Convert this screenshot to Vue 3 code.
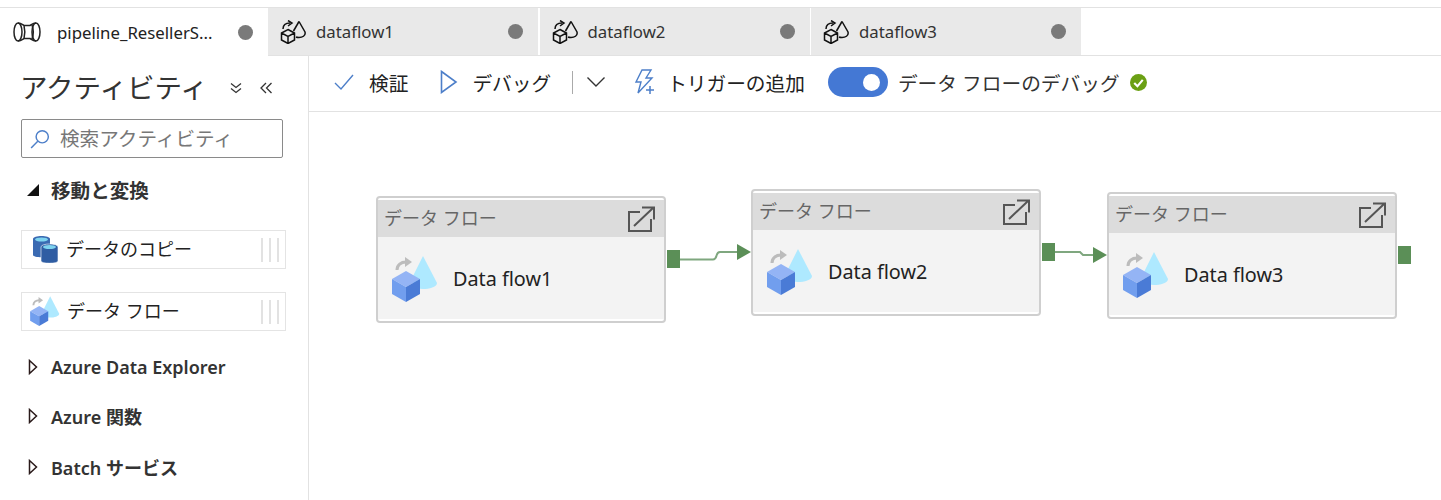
<template>
  <div class="page">
    <svg class="defs" width="0" height="0">
      <defs>
        <symbol id="flow-color" viewBox="0 0 46 48">
          <path d="M5 16c0-5 4-8 9-8" fill="none" stroke="#bcbcbc" stroke-width="3" />
          <path d="M13 3l7 5-7 5z" fill="#bcbcbc" />
          <path d="M31 2 45 29c0 4-8 6-14 6-4 0-8-1-10-3V22z" fill="#aee9ff" />
          <path d="M14 17 28 25 14 33 0 25z" fill="#94b4f5" />
          <path d="M0 25l14 8v15L0 40z" fill="#719eee" />
          <path d="M28 25 14 33v15l14-8z" fill="#4a7bd6" />
        </symbol>
        <symbol id="flow-line" viewBox="0 0 26 24">
          <path d="M3 9C3 5 6 3 10 3" fill="none" stroke="#111" stroke-width="1.500" />
          <path d="M8 .5 12 3 8 6" fill="none" stroke="#111" stroke-width="1.500" />
          <path d="M19 1.500 25 12c1 4-3 5.500-6 5.500-1 0-2 0-3-.5" fill="none" stroke="#111" stroke-width="1.500" />
          <path d="M19 1.500 13.500 11" fill="none" stroke="#111" stroke-width="1.500" />
          <path d="M8 9.500 14.500 13v7L8 23.500 1.500 20v-7zM1.500 13 8 16.500 14.500 13M8 16.500v7" fill="none" stroke="#111" stroke-width="1.500" />
        </symbol>
        <symbol id="open-ext" viewBox="0 0 27 26">
          <path d="M12 6H1v19h22V13" fill="none" stroke="#555" stroke-width="2" />
          <path d="M6 20 25 2M14 1.500h12v12" fill="none" stroke="#555" stroke-width="2" />
        </symbol>
      </defs>
    </svg>

    <div class="tabs">
      <div v-for="tab in tabs" :key="tab.name" class="tab" :class="{ active: tab.active }">
        <svg v-if="tab.active" class="pipe-icon" viewBox="0 0 28 20">
          <ellipse cx="5" cy="10" rx="4" ry="9" fill="none" stroke="#222" stroke-width="1.500" />
          <ellipse cx="23" cy="10" rx="4" ry="9" fill="none" stroke="#222" stroke-width="1.500" />
          <path d="M5 1c3 0 5 2 6 2.500h6C18 3 20 1 23 1M5 19c3 0 5-2 6-2.500h6c1 .5 3 2.500 6 2.500M11 3.500c1 4 1 9 0 13M19 3c1.500 4 1.500 10 0 14" fill="none" stroke="#222" stroke-width="1.500" />
        </svg>
        <svg v-else class="tab-icon"><use href="#flow-line" /></svg>
        <span class="tab-name">{{ tab.name }}</span>
        <span class="dot"></span>
      </div>
    </div>

    <div class="main">
      <aside class="side">
        <div class="side-head">
          <span class="side-title">アクティビティ</span>
          <svg class="chev" viewBox="0 0 14 14">
            <path d="M2 2.500 7 6.500 12 2.500M2 7.500 7 11.500 12 7.500" fill="none" stroke="#333" stroke-width="1.300" />
          </svg>
          <svg class="chev" viewBox="0 0 14 14">
            <path d="M7 2 2 7 7 12M12.500 2 7.500 7 12.500 12" fill="none" stroke="#333" stroke-width="1.300" />
          </svg>
        </div>

        <div class="search">
          <svg class="search-icon" viewBox="0 0 18 18">
            <circle cx="11" cy="7" r="5.500" fill="none" stroke="#4d7fc9" stroke-width="1.300" />
            <path d="M7 11 1 17" fill="none" stroke="#4d7fc9" stroke-width="1.300" />
          </svg>
          <span>検索アクティビティ</span>
        </div>

        <div class="group open-group">
          <span class="tri-open"></span>
          <span>移動と変換</span>
        </div>

        <div class="item copy-item">
          <svg class="copy-icon" viewBox="0 0 25 27">
            <path d="M0 3c0-4 17-4 17 0v16c0 3-17 3-17 0z" fill="#3a6ab2" />
            <ellipse cx="8.500" cy="3.500" rx="6.500" ry="2" fill="#7ed3ef" />
            <path d="M8 11c0-4 17-4 17 0v14c0 3-17 3-17 0z" fill="#2f5da3" stroke="#fff" stroke-width=".6" />
            <ellipse cx="16.500" cy="11" rx="6.500" ry="2" fill="#7ed3ef" />
          </svg>
          <span class="item-label">データのコピー</span>
          <span class="grip"><i></i><i></i><i></i></span>
        </div>

        <div class="item flow-item">
          <svg class="flow-small"><use href="#flow-color" /></svg>
          <span class="item-label">データ フロー</span>
          <span class="grip"><i></i><i></i><i></i></span>
        </div>

        <div v-for="g in groups" :key="g" class="group closed-group">
          <svg class="tri-closed" viewBox="0 0 10 16">
            <path d="M1.500 1.500 8.500 8 1.500 14.500z" fill="none" stroke="#2a1a1a" stroke-width="1.500" />
          </svg>
          <span>{{ g }}</span>
        </div>
      </aside>

      <section class="work">
        <div class="toolbar">
          <button class="tool check-tool">
            <svg class="tool-icon" viewBox="0 0 20 20">
              <path d="M1 11 7 17 19 3" fill="none" stroke="#4d7fc9" stroke-width="1.400" />
            </svg>
            検証
          </button>
          <button class="tool debug-tool">
            <svg class="tool-icon play" viewBox="0 0 18 24">
              <path d="M1.500 1.500 16 12 1.500 22.500z" fill="none" stroke="#4d7fc9" stroke-width="1.600" />
            </svg>
            デバッグ
          </button>
          <span class="sep"></span>
          <svg class="caret" viewBox="0 0 20 12">
            <path d="M1.500 1.500 10 10 18.500 1.500" fill="none" stroke="#333" stroke-width="1.400" />
          </svg>
          <button class="tool trigger-tool">
            <svg class="tool-icon bolt" viewBox="0 0 22 26">
              <path d="M9 1h9l-5 8h6L5 24l3-11H3z" fill="none" stroke="#4d7fc9" stroke-width="1.400" />
              <path d="M17 17v8M13 21h8" fill="none" stroke="#4d7fc9" stroke-width="1.500" />
            </svg>
            トリガーの追加
          </button>
          <span class="toggle"><span class="knob"></span></span>
          <span class="toggle-label">データ フローのデバッグ</span>
          <svg class="ok" viewBox="0 0 16 16">
            <circle cx="8" cy="8" r="8" fill="#6ba014" />
            <path d="M4 8.500 7 11.500 12 5.500" fill="none" stroke="#fff" stroke-width="2" />
          </svg>
        </div>

        <div class="canvas">
          <div
            v-for="node in nodes"
            :key="node.name"
            class="node"
            :style="{ left: node.x + 'px', top: node.y + 'px' }"
          >
            <div class="node-head">
              <span class="node-type">データ フロー</span>
              <svg class="ext"><use href="#open-ext" /></svg>
            </div>
            <div class="node-body">
              <svg class="node-icon"><use href="#flow-color" /></svg>
              <span class="node-name">{{ node.name }}</span>
            </div>
            <span class="port"></span>
          </div>

          <svg class="wires" width="1132" height="388">
            <path d="M371 147.500H404c5 0 2-7.500 7-7.500H429" fill="none" stroke="#7fa77f" stroke-width="2" />
            <path d="M428 132 442 140 428 148z" fill="#5b8f57" />
            <path d="M746 140H771l3 3H785" fill="none" stroke="#7fa77f" stroke-width="2" />
            <path d="M784 135 798 143 784 151z" fill="#5b8f57" />
          </svg>
        </div>
      </section>
    </div>
  </div>
</template>

<script setup>
const tabs = [
  { name: 'pipeline_ResellerS...', active: true },
  { name: 'dataflow1' },
  { name: 'dataflow2' },
  { name: 'dataflow3' }
]

const groups = ['Azure Data Explorer', 'Azure 関数', 'Batch サービス']

const nodes = [
  { name: 'Data flow1', x: 67, y: 84 },
  { name: 'Data flow2', x: 442, y: 77 },
  { name: 'Data flow3', x: 798, y: 80 }
]
</script>

<style scoped>
.page {
  width: 1441px;
  height: 500px;
  overflow: hidden;
  background: #fff;
  color: #222;
  font-family: "Noto Sans", "Noto Sans CJK JP", sans-serif;
}

.defs {
  position: absolute;
}

.tabs {
  display: flex;
  height: 49px;
  margin-top: 7px;
  border-top: 1px solid #e2e2e2;
  border-bottom: 1px solid #e2e2e2;
  box-sizing: border-box;
}

.tab {
  display: flex;
  align-items: center;
  flex: none;
  width: 270px;
  height: 47px;
  margin-right: 1.500px;
  padding: 0 15px 0 12px;
  box-sizing: border-box;
  background: #e9e9e9;
  font-size: 16.800px;
  color: #333;
}

.tab.active {
  width: 268px;
  margin-right: 0;
  height: 48px;
  padding: 0 15px 0 13px;
  background: #fff;
  color: #222;
}

.pipe-icon {
  width: 28px;
  height: 20px;
  margin-right: 16px;
}

.tab-icon {
  width: 26px;
  height: 24px;
  margin-right: 10px;
}

.tab-name {
  flex: 1;
  white-space: nowrap;
}

.dot {
  width: 15px;
  height: 15px;
  border-radius: 50%;
  background: #7a7a7a;
}

.main {
  display: flex;
  height: 444px;
}

.side {
  width: 309px;
  flex: none;
  box-sizing: border-box;
  border-right: 1px solid #e2e2e2;
  padding: 14px 0 0 21px;
}

.side-head {
  display: flex;
  align-items: center;
  height: 36px;
}

.side-title {
  flex: none;
  width: 209px;
  margin-left: -1px;
  font-size: 27.500px;
  line-height: 36px;
  color: #333;
  white-space: nowrap;
}

.chev {
  flex: none;
  width: 14px;
  height: 14px;
  margin-right: 16px;
}

.search {
  display: flex;
  align-items: center;
  width: 262px;
  height: 39px;
  margin-top: 13px;
  box-sizing: border-box;
  border: 1px solid #8a8a8a;
  border-radius: 2px;
  padding: 0 0 3px 8px;
  font-size: 19.600px;
  color: #777;
}

.search-icon {
  width: 20px;
  height: 20px;
  margin: 3px 10px 0 0;
}

.group {
  display: flex;
  align-items: center;
  font-size: 18px;
  font-weight: 600;
  color: #333;
}

.open-group {
  height: 26px;
  margin-top: 18px;
  font-size: 19.600px;
}

.tri-open {
  width: 0;
  height: 0;
  margin: 2px 12px 0 6px;
  border-left: 12px solid transparent;
  border-bottom: 12px solid #111;
}

.closed-group {
  height: 26px;
  margin-top: 23px;
}

.closed-group:last-child {
  margin-top: 25px;
}

.tri-closed {
  width: 10px;
  height: 16px;
  margin: 0 13px 0 7px;
}

.item {
  display: flex;
  align-items: center;
  width: 265px;
  height: 39px;
  box-sizing: border-box;
  border: 1px solid #e4e4e4;
  font-size: 18px;
}

.copy-item {
  margin-top: 28px;
}

.flow-item {
  margin-top: 23px;
}

.copy-icon {
  flex: none;
  width: 25px;
  height: 27px;
  margin: 0 8px 0 11px;
}

.flow-small {
  flex: none;
  width: 30px;
  height: 31px;
  margin: -2px 7px 0 8px;
}

.item-label {
  flex: 1;
  margin-top: -3px;
  white-space: nowrap;
}

.grip {
  display: flex;
  gap: 6px;
  margin-right: 6px;
}

.grip i {
  width: 2px;
  height: 24px;
  background: #e2e2e2;
}

.work {
  flex: 1;
  min-width: 0;
}

.toolbar {
  display: flex;
  align-items: center;
  height: 56px;
  box-sizing: border-box;
  border-bottom: 1px solid #e2e2e2;
  padding: 0 0 3px 25px;
  font-size: 19.700px;
  white-space: nowrap;
}

.tool {
  display: flex;
  align-items: center;
  border: 0;
  padding: 0;
  background: none;
  font: inherit;
  color: #222;
}

.tool-icon {
  width: 20px;
  height: 20px;
  margin-right: 15px;
}

.debug-tool {
  margin-left: 32px;
}

.play {
  width: 18px;
  height: 24px;
  margin-right: 14px;
}

.sep {
  width: 1px;
  height: 23px;
  margin: 0 13px 0 21px;
  background: #aaa;
}

.caret {
  width: 20px;
  height: 12px;
}

.trigger-tool {
  margin-left: 27px;
}

.bolt {
  width: 22px;
  height: 26px;
  margin-right: 12px;
}

.toggle {
  display: flex;
  align-items: center;
  justify-content: flex-end;
  width: 60px;
  height: 30px;
  margin-left: 23px;
  padding-right: 8px;
  box-sizing: border-box;
  border-radius: 15px;
  background: #4478d4;
}

.knob {
  width: 17px;
  height: 17px;
  border-radius: 50%;
  background: #fff;
}

.toggle-label {
  margin-left: 10px;
  color: #333;
}

.ok {
  width: 17px;
  height: 17px;
  margin: 1px 0 0 10px;
}

.canvas {
  position: relative;
  height: 388px;
}

.wires {
  position: absolute;
  left: 0;
  top: 0;
  pointer-events: none;
}

.node {
  position: absolute;
  width: 290px;
  height: 127px;
  box-sizing: border-box;
  border: 2px solid #cfcfcf;
  border-radius: 4px;
  background: #fff;
  padding-top: 2px;
}

.node-head {
  display: flex;
  align-items: center;
  justify-content: space-between;
  height: 37px;
  padding: 0 9px 0 6px;
  background: #dcdcdc;
  font-size: 18px;
  color: #666;
}

.node-type {
  margin-top: -3px;
}

.ext {
  width: 27px;
  height: 26px;
}

.node-body {
  display: flex;
  align-items: center;
  height: 82px;
  padding-left: 14px;
  background: #f3f3f3;
}

.node-icon {
  flex: none;
  width: 46px;
  height: 48px;
  margin-right: 15px;
}

.node-name {
  margin-top: 1px;
  font-size: 19.800px;
  color: #222;
}

.port {
  position: absolute;
  left: 289px;
  top: 52px;
  width: 13px;
  height: 18px;
  background: #5b8f57;
}
</style>
